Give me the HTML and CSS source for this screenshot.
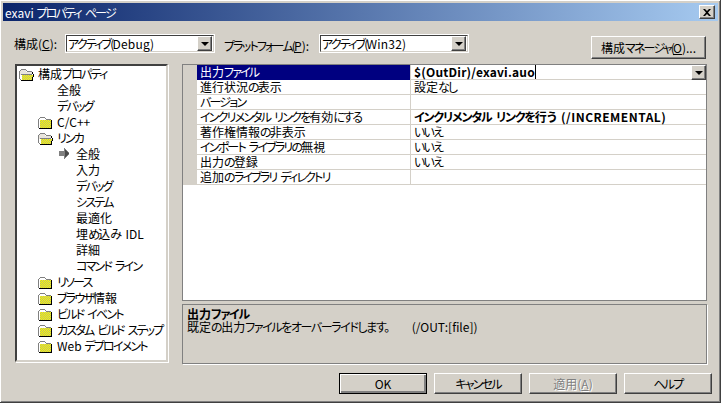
FILE: index.html
```html
<!DOCTYPE html>
<html lang="ja">
<head>
    <meta charset="UTF-8">
    <title>exavi プロパティ ページ</title>
    <link rel="stylesheet" href="styles.css">
</head>
<body>

    <!-- shared icon shapes -->
    <svg class="defs" width="0" height="0">
        <defs>
            <pattern id="dither" width="2" height="2" patternUnits="userSpaceOnUse">
                <rect width="2" height="2" fill="#ffff00"/>
                <rect width="1" height="1" fill="#b8b870"/>
                <rect x="1" y="1" width="1" height="1" fill="#b8b870"/>
            </pattern>
            <symbol id="folder" viewBox="0 0 15 12">
                <path d="M1 1h6v2h6v8H1z" fill="#ffffff"/>
                <rect x="2" y="3" width="11" height="8" fill="url(#dither)"/>
                <path d="M2 0h5v1H2zM1 1h1v1H1zM0 2h1v9H0zM7 1h1v1H7zM8 2h5v1H8z" fill="#808080"/>
                <path d="M13 3h1v9h-1zM1 11h13v1H1z" fill="#000000"/>
            </symbol>
            <symbol id="folder-open" viewBox="0 0 15 12">
                <path d="M1 1h6v2h6v3H1z" fill="#e8e4dc"/>
                <rect x="3" y="6" width="11" height="5" fill="url(#dither)"/>
                <path d="M2 0h5v1H2zM1 1h1v1H1zM0 2h1v8H0zM7 1h1v1H7zM8 2h5v1H8zM2 5h11v1H2zM1 10h1v1H1z" fill="#808080"/>
                <path d="M13 3h1v2h-1zM14 5h1v3h-1zM13 8h1v3h-1zM2 11h12v1H2z" fill="#000000"/>
            </symbol>
        </defs>
    </svg>

    <div class="window">
        <div class="titlebar">
            <span class="title">exavi <span class="k">プロパティ ページ</span></span>
            <button class="close">
                <svg width="8" height="7" viewBox="0 0 8 7"><path d="M0 0h2l2 2 2-2h2L5 3.500 8 7H6L4 5 2 7H0l3-3.500z" fill="#000"/></svg>
            </button>
        </div>

        <div class="toolbar">
            <label class="label label-config">構成(<u>C</u>):</label>
            <div class="combo">
                <span class="combo-text"><span class="k">アクティブ(</span><span class="latin">Debug)</span></span>
                <span class="combo-arrow"></span>
            </div>
            <label class="label label-platform"><span class="k">プラットフォーム(</span><u>P</u>):</label>
            <div class="combo">
                <span class="combo-text"><span class="k">アクティブ(</span><span class="latin">Win32)</span></span>
                <span class="combo-arrow"></span>
            </div>
            <button class="btn btn-manager">構成<span class="k">マネージャ(</span><u>O</u>)...</button>
        </div>

        <div class="main">
            <div class="tree">
                <div class="node lv0"><span class="slot"><svg class="icon"><use href="#folder-open"/></svg></span><span>構成<span class="k">プロパティ</span></span></div>
                <div class="node lv1"><span class="slot"></span>全般</div>
                <div class="node lv1"><span class="slot"></span><span class="k">デバッグ</span></div>
                <div class="node lv1"><span class="slot"><svg class="icon"><use href="#folder"/></svg></span>C/C++</div>
                <div class="node lv1"><span class="slot"><svg class="icon"><use href="#folder-open"/></svg></span><span class="k">リンカ</span></div>
                <div class="node lv2"><span class="slot"><svg class="arrow" width="10" height="11" viewBox="0 0 10 11"><path d="M5 0h1l4 5v1l-4 5H5V8H0V3h5z" fill="#808080"/><path d="M6 1l4 4.500L6 10z" fill="#4a4a4a"/></svg></span>全般</div>
                <div class="node lv2"><span class="slot"></span>入力</div>
                <div class="node lv2"><span class="slot"></span><span class="k">デバッグ</span></div>
                <div class="node lv2"><span class="slot"></span><span class="k">システム</span></div>
                <div class="node lv2"><span class="slot"></span>最適化</div>
                <div class="node lv2"><span class="slot"></span><span>埋<span class="k">め</span>込<span class="k">み</span>&nbsp;&nbsp;IDL</span></div>
                <div class="node lv2"><span class="slot"></span>詳細</div>
                <div class="node lv2"><span class="slot"></span><span class="k">コマンド ライン</span></div>
                <div class="node lv1"><span class="slot"><svg class="icon"><use href="#folder"/></svg></span><span class="k">リソース</span></div>
                <div class="node lv1"><span class="slot"><svg class="icon"><use href="#folder"/></svg></span><span><span class="k">ブラウザ</span>情報</span></div>
                <div class="node lv1"><span class="slot"><svg class="icon"><use href="#folder"/></svg></span><span class="k">ビルド イベント</span></div>
                <div class="node lv1"><span class="slot"><svg class="icon"><use href="#folder"/></svg></span><span class="k">カスタム ビルド ステップ</span></div>
                <div class="node lv1"><span class="slot"><svg class="icon"><use href="#folder"/></svg></span><span>Web <span class="k">デプロイメント</span></span></div>
            </div>

            <div class="right">
                <div class="grid">
                    <div class="row selected">
                        <div class="name">出力<span class="k">ファイル</span></div>
                        <div class="value bold latin">$(OutDir)/exavi.auo<span class="caret"></span><span class="combo-arrow value-arrow"></span></div>
                    </div>
                    <div class="row"><div class="name">進行状況<span class="k">の</span>表示</div><div class="value">設定<span class="k">なし</span></div></div>
                    <div class="row"><div class="name"><span class="k">バージョン</span></div><div class="value"></div></div>
                    <div class="row"><div class="name"><span class="k">インクリメンタル リンクを</span>有効<span class="k">にする</span></div><div class="value bold"><span class="kb">インクリメンタル リンクを</span>行<span class="kb">う</span>&nbsp;&nbsp;<span class="wide">(/INCREMENTAL)</span></div></div>
                    <div class="row"><div class="name">著作権情報<span class="k">の</span>非表示</div><div class="value"><span class="k">いいえ</span></div></div>
                    <div class="row"><div class="name"><span class="k">インポート ライブラリの</span>無視</div><div class="value"><span class="k">いいえ</span></div></div>
                    <div class="row"><div class="name">出力<span class="k">の</span>登録</div><div class="value"><span class="k">いいえ</span></div></div>
                    <div class="row"><div class="name">追加<span class="k">のライブラリ ディレクトリ</span></div><div class="value"></div></div>
                </div>
                <div class="desc">
                    <div class="bold">出力<span class="kb">ファイル</span></div>
                    <div class="desc-text"><span>既定<span class="ks">の</span>出力<span class="ks">ファイルをオーバーライドします。</span></span><span>(/OUT:[file])</span></div>
                </div>
            </div>
        </div>

        <div class="buttons">
            <button class="btn btn-default">OK</button>
            <button class="btn"><span class="k">キャンセル</span></button>
            <button class="btn disabled">適用(<u>A</u>)</button>
            <button class="btn"><span class="k">ヘルプ</span></button>
        </div>
    </div>

</body>
</html>
```

FILE: styles.css
```css
/* Classic dialog look */
html, body {
    margin: 0;
    padding: 0;
}
body {
    width: 721px;
    height: 403px;
    overflow: hidden;
    background-color: #d4d0c8;
    font-family: "Noto Sans CJK JP", "Noto Sans", sans-serif;
    font-size: 12px;
    line-height: 15px;
    font-feature-settings: "palt";
    color: #000;
}
.defs {
    position: absolute;
}
/* kana runs were narrower than kanji in the old UI font */
.k {
    letter-spacing: -1.8px;
    word-spacing: 3px;
}
.ks {
    letter-spacing: -1.4px;
}
.kb {
    letter-spacing: -1.2px;
    word-spacing: 3px;
}
.wide {
    letter-spacing: 0.5px;
}
.latin {
    letter-spacing: 0.2px;
}
.window {
    box-sizing: border-box;
    width: 721px;
    height: 403px;
    display: flex;
    flex-direction: column;
    border-right: 1px solid #404040;
    border-bottom: 1px solid #404040;
    box-shadow: inset 1px 1px 0 #fff, inset -1px -1px 0 #808080;
    padding: 3px 2px 2px 3px;
}

/* Title bar */
.titlebar {
    height: 18px;
    flex: none;
    display: flex;
    align-items: center;
    justify-content: space-between;
    padding: 0 3px 0 2px;
    background: linear-gradient(to right, #0a246a, #a6caf0);
    color: #fff;
}
.close {
    box-sizing: border-box;
    width: 16px;
    height: 14px;
    padding: 0;
    display: flex;
    align-items: center;
    justify-content: center;
    background-color: #d4d0c8;
    border: 1px solid;
    border-color: #fff #404040 #404040 #fff;
    box-shadow: inset -1px -1px 0 #808080;
}

/* Configuration row */
.toolbar {
    flex: none;
    height: 24px;
    margin-top: 13px;
    padding: 0 12px 0 11px;
    display: flex;
    align-items: flex-start;
}
.label {
    white-space: nowrap;
}
.label-config {
    width: 51px;
    margin-top: 2px;
}
.label-platform {
    width: 95px;
    margin-left: 9px;
    margin-top: 4px;
}
.combo {
    box-sizing: border-box;
    width: 150px;
    height: 19px;
    display: flex;
    align-items: center;
    justify-content: space-between;
    padding-right: 1px;
    background-color: #fff;
    border: 2px solid;
    border-color: #404040 #d4d0c8 #d4d0c8 #404040;
    outline: 1px solid #fff;
    outline-offset: -1px;
}
.combo-text {
    padding-left: 1px;
    white-space: nowrap;
}
.combo-arrow {
    box-sizing: border-box;
    flex: none;
    position: relative;
    width: 15px;
    height: 15px;
    background-color: #d4d0c8;
    border: 1px solid;
    border-color: #fff #404040 #404040 #fff;
    box-shadow: inset -1px -1px 0 #808080;
}
.combo-arrow::after {
    content: "";
    position: absolute;
    left: 3px;
    top: 5px;
    border: 4px solid transparent;
    border-top-color: #000;
    border-bottom-width: 0;
}
.btn {
    box-sizing: border-box;
    width: 88px;
    height: 21px;
    padding: 0;
    background-color: #d4d0c8;
    font: inherit;
    font-feature-settings: inherit;
    color: #000;
    border: 1px solid;
    border-color: #fff #404040 #404040 #fff;
    box-shadow: inset -1px -1px 0 #808080;
}
.btn-manager {
    width: 115px;
    height: 23px;
    margin-top: 2px;
    margin-left: auto;
}
.btn-default {
    border: 1px solid #000;
    box-shadow: inset 1px 1px 0 #fff, inset -2px -2px 0 #808080;
}
.disabled {
    color: #808080;
    text-shadow: 1px 1px 0 #fff;
}

/* Tree on the left, property grid on the right */
.main {
    flex: none;
    height: 301px;
    margin-top: 6px;
    padding: 0 11px 0 12px;
    display: flex;
    gap: 14px;
}
.tree {
    box-sizing: border-box;
    width: 153px;
    height: 298px;
    background-color: #fff;
    border: 2px solid;
    border-color: #404040 #d4d0c8 #d4d0c8 #404040;
    box-shadow: 1px 1px 0 #fff;
}
.node {
    height: 16px;
    line-height: 16px;
    display: flex;
    align-items: center;
    white-space: nowrap;
}
.lv0 { padding-left: 2px; }
.lv1 { padding-left: 21px; }
.lv2 { padding-left: 40px; }
.slot {
    flex: none;
    width: 19px;
    height: 16px;
    display: flex;
    align-items: flex-start;
}
.icon {
    width: 15px;
    height: 12px;
    margin-top: 3px;
    shape-rendering: crispEdges;
}
.arrow {
    margin-left: 2px;
    margin-top: 2px;
    shape-rendering: crispEdges;
}

.right {
    flex: none;
    width: 525px;
    display: flex;
    flex-direction: column;
    gap: 3px;
}
.grid {
    box-sizing: border-box;
    height: 237px;
    padding-left: 14px;
    background-color: #fff;
    background-image: linear-gradient(#d4d0c8, #d4d0c8);
    background-size: 14px 120px;
    background-repeat: no-repeat;
    border: 1px solid #808080;
}
.row {
    display: grid;
    grid-template-columns: 214px 1fr;
    height: 15px;
    box-sizing: border-box;
    border-bottom: 1px solid #d4d0c8;
    white-space: nowrap;
}
.name {
    padding-left: 3px;
    line-height: 14px;
    border-right: 1px solid #d4d0c8;
}
.value {
    padding-left: 3px;
    line-height: 14px;
}
.row:first-child .value {
    display: flex;
    align-items: flex-start;
}
.selected .name {
    background-color: #000080;
    color: #fff;
}
.bold {
    font-weight: bold;
}
.caret {
    width: 1px;
    height: 14px;
    background-color: #000;
}
.value-arrow {
    margin-left: auto;
}
.desc {
    box-sizing: border-box;
    height: 60px;
    padding: 2px 4px;
    line-height: 13px;
    border: 1px solid #808080;
    box-shadow: 1px 1px 0 #fff;
}
.desc-text {
    display: flex;
    gap: 23px;
    white-space: nowrap;
}

/* Bottom buttons */
.buttons {
    flex: none;
    margin-top: 8px;
    padding-right: 6px;
    display: flex;
    justify-content: flex-end;
    gap: 7px;
}
```
